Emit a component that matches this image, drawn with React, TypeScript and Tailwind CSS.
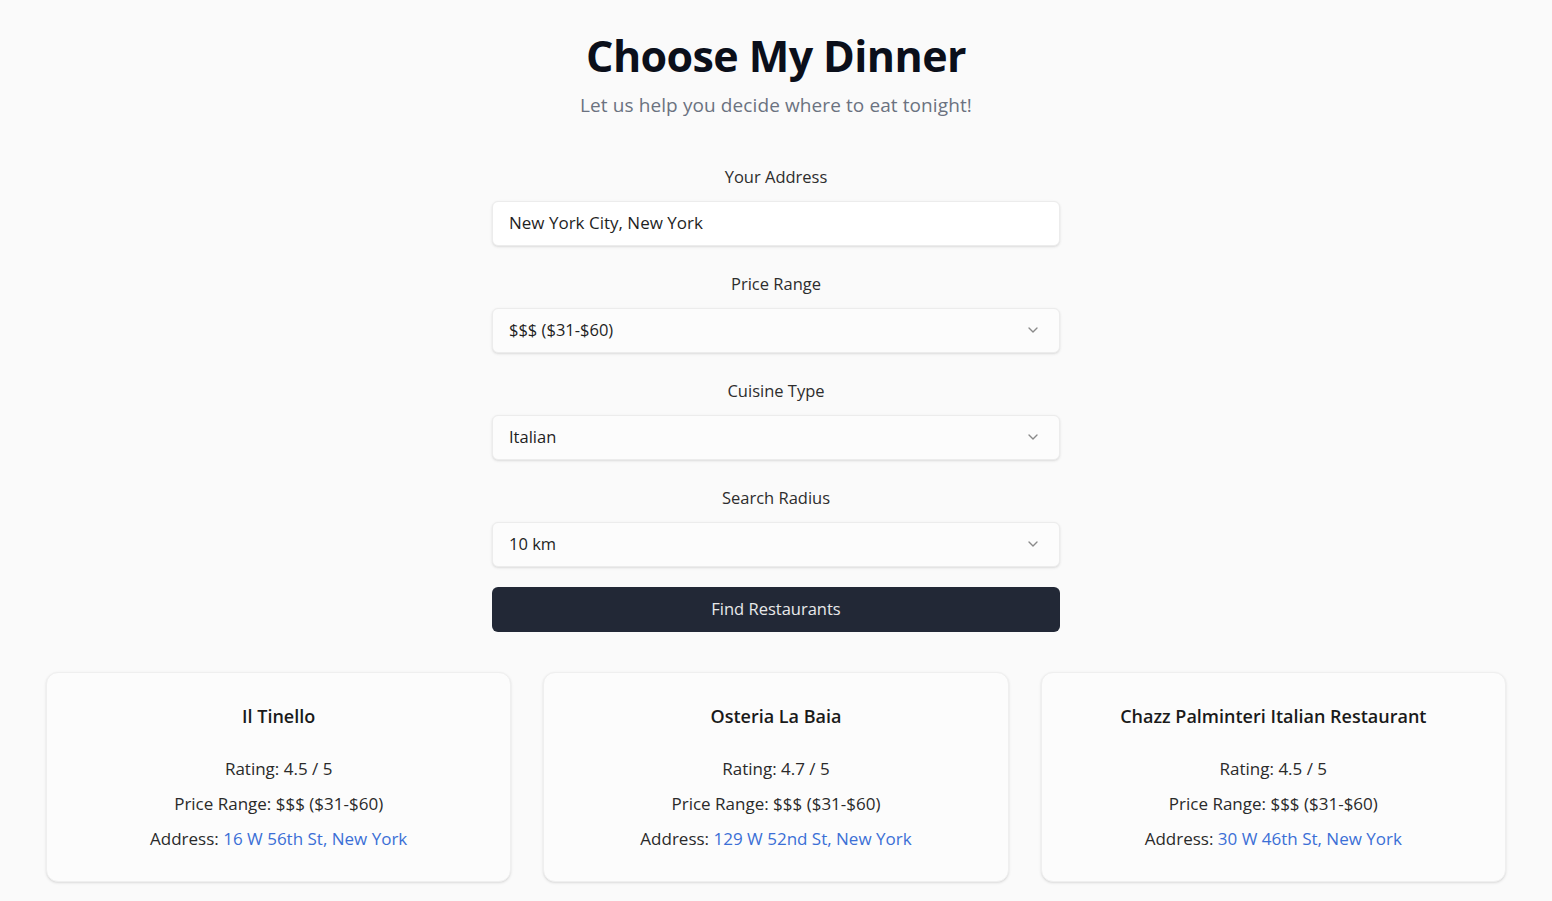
import React from "react";
import { ChevronDown } from "lucide-react";

const restaurants = [
  { name: "Il Tinello", rating: "4.5", price: "$$$ ($31-$60)", address: "16 W 56th St, New York" },
  { name: "Osteria La Baia", rating: "4.7", price: "$$$ ($31-$60)", address: "129 W 52nd St, New York" },
  { name: "Chazz Palminteri Italian Restaurant", rating: "4.5", price: "$$$ ($31-$60)", address: "30 W 46th St, New York" },
];

const Field = ({ label, children }: { label: string; children: React.ReactNode }) => (
  <div className="flex flex-col items-center">
    <label className="text-[16.5px] text-[#2d2d2d] leading-6 mb-[12px]">{label}</label>
    {children}
  </div>
);

const SelectBox = ({ value }: { value: string }) => (
  <div className="w-full h-[45px] flex items-center justify-between px-4 bg-[#fcfcfc] border border-[#ececec] rounded-md shadow-sm">
    <span className="text-[16.5px] text-[#1f1f1f]">{value}</span>
    <ChevronDown className="w-4 h-4 text-[#8a8a8a] mr-[2px]" strokeWidth={2} />
  </div>
);

export default function App() {
  return (
    <div
      className="min-h-screen bg-[#fafafa] flex flex-col items-center pt-[28px]"
      style={{ fontFamily: '"Open Sans", "Noto Sans", sans-serif' }}
    >
      <h1 className="text-[43px] font-bold text-[#0b0f1a] leading-[56px] tracking-[-0.6px]">Choose My Dinner</h1>
      <p className="text-[19px] text-[#6b7280] mt-[7px] tracking-[0.1px]">Let us help you decide where to eat tonight!</p>

      <div className="w-[568px] flex flex-col gap-[26px] mt-[45px]">
        <Field label="Your Address">
          <div className="w-full h-[45px] flex items-center px-4 bg-white border border-[#ececec] rounded-md shadow-sm">
            <span className="text-[17px] text-[#1f1f1f]">New York City, New York</span>
          </div>
        </Field>
        <Field label="Price Range">
          <SelectBox value="$$$ ($31-$60)" />
        </Field>
        <Field label="Cuisine Type">
          <SelectBox value="Italian" />
        </Field>
        <Field label="Search Radius">
          <SelectBox value="10 km" />
        </Field>
      </div>

      <button className="w-[568px] h-[45px] mt-[20px] bg-[#222836] text-[#e8e8ea] text-[16.5px] rounded-md">
        Find Restaurants
      </button>

      <div className="w-[1460px] grid grid-cols-3 gap-[32px] mt-[40px]">
        {restaurants.map((r) => (
          <div
            key={r.name}
            className="h-[210px] bg-[#fcfcfc] border border-[#efefef] rounded-xl shadow-sm flex flex-col items-center pt-[29px]"
          >
            <h2 className="text-[18px] font-semibold text-[#1a1a1a] leading-7">{r.name}</h2>
            <div className="flex flex-col items-center gap-[11px] mt-[27px] text-[17px] text-[#2a2a2a]">
              <p className="leading-6">Rating: {r.rating} / 5</p>
              <p className="leading-6">Price Range: {r.price}</p>
              <p className="leading-6">
                Address: <span className="text-[#3b6fd6]">{r.address}</span>
              </p>
            </div>
          </div>
        ))}
      </div>
    </div>
  );
}
